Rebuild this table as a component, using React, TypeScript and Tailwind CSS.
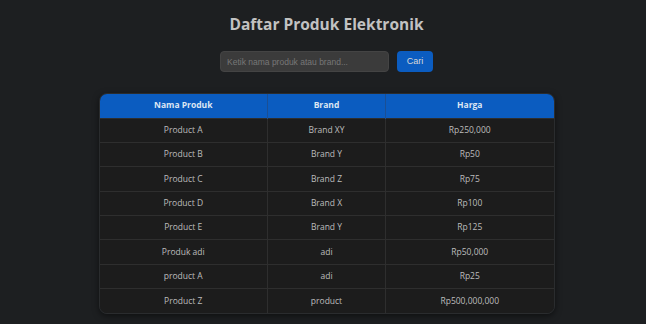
import React from "react";

const rows = [
  ["Product A", "Brand XY", "Rp250,000"],
  ["Product B", "Brand Y", "Rp50"],
  ["Product C", "Brand Z", "Rp75"],
  ["Product D", "Brand X", "Rp100"],
  ["Product E", "Brand Y", "Rp125"],
  ["Produk adi", "adi", "Rp50,000"],
  ["product A", "adi", "Rp25"],
  ["Product Z", "product", "Rp500,000,000"],
];

const arial = { fontFamily: '"Liberation Sans", Arial, sans-serif' };

export default function App() {
  return (
    <div
      className="w-[646px] h-[324px] overflow-hidden bg-[#1d1f21] pl-[7px]"
      style={{ fontFamily: '"Open Sans", "Noto Sans", sans-serif' }}
    >
      <div className="flex flex-col items-center">
        <h1 className="mt-[12px] h-[24px] text-[15.5px] leading-[24px] font-bold text-[#c2c2c2]">
          Daftar Produk Elektronik
        </h1>
        <div className="mt-[15px] flex items-center gap-[8px]">
          <input
            style={arial}
            className="w-[169px] h-[21px] rounded-[4px] bg-[#3b3b3b] border border-[#444] px-[6px] text-[8.5px] text-[#ccc] placeholder:text-[#777] outline-none"
            placeholder="Ketik nama produk atau brand..."
          />
          <button
            style={arial}
            className="w-[36px] h-[21px] rounded-[4px] bg-[#0b5cc0] text-[9px] text-[#d8d8d8]"
          >
            Cari
          </button>
        </div>
        <div className="mt-[21px] w-[456px] rounded-[8px] overflow-hidden border border-[#2a2c2e] shadow-[0_2px_6px_rgba(0,0,0,0.5)]">
          <table className="w-full border-collapse text-[8.5px]">
            <thead>
              <tr className="bg-[#0b5cc0] h-[24px]">
                <th className="w-[168px] font-bold text-[#dde6f3] border-r border-[#1b4f94]">Nama Produk</th>
                <th className="w-[118px] font-bold text-[#dde6f3] border-r border-[#1b4f94]">Brand</th>
                <th className="font-bold text-[#dde6f3]">Harga</th>
              </tr>
            </thead>
            <tbody className="bg-[#1c1c1c]">
              {rows.map((r, i) => (
                <tr key={i} className="h-[24.4px] border-t border-[#2e2e2e]">
                  <td className="text-center text-[#bdbdbd] border-r border-[#2e2e2e]">{r[0]}</td>
                  <td className="text-center text-[#bdbdbd] border-r border-[#2e2e2e]">{r[1]}</td>
                  <td className="text-center text-[#bdbdbd]">{r[2]}</td>
                </tr>
              ))}
            </tbody>
          </table>
        </div>
      </div>
    </div>
  );
}
